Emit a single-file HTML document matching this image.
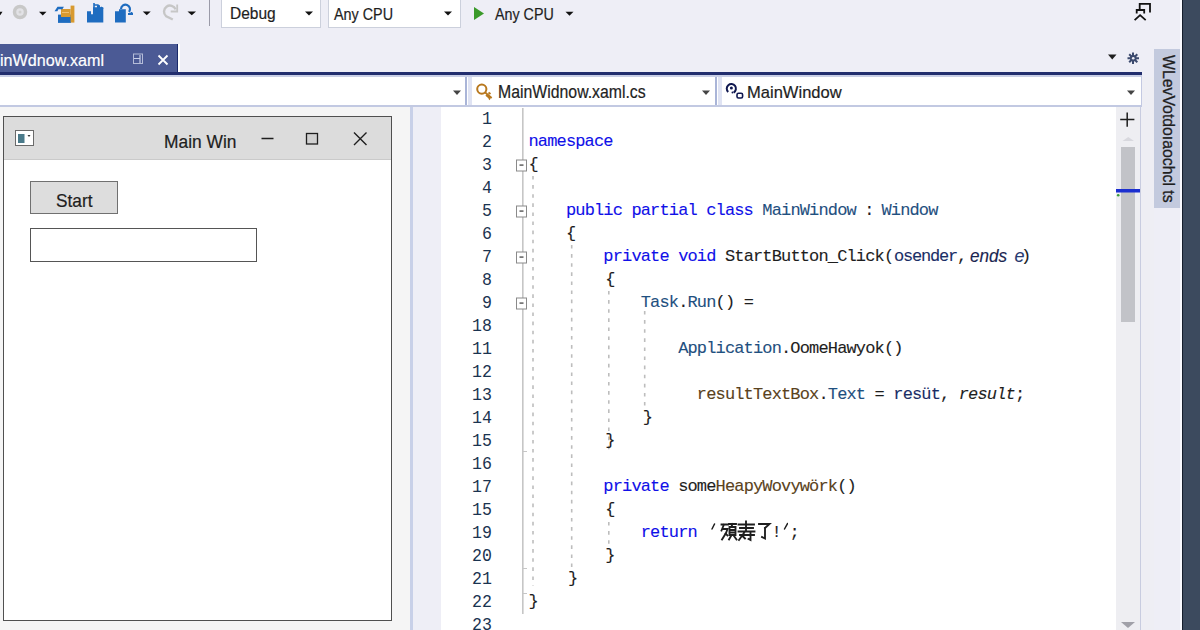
<!DOCTYPE html>
<html><head><meta charset="utf-8">
<style>
*{margin:0;padding:0;box-sizing:border-box}
html,body{width:1200px;height:630px;overflow:hidden;background:#eeeef6;font-family:"Liberation Sans",sans-serif;color:#1e1e1e}
.a{position:absolute}
.ui{line-height:20px;white-space:nowrap;-webkit-text-stroke:0.2px currentColor}
.code{font-family:"Liberation Mono",monospace;font-size:17.0px;letter-spacing:-0.850px;line-height:23px;white-space:pre;-webkit-text-stroke:0.1px currentColor}
.ln{position:absolute;left:431px;width:61px;margin-top:0px;transform:scaleX(0.92);transform-origin:61px 0;text-align:right;color:#1a3350;font-size:18px;letter-spacing:0;-webkit-text-stroke:0}
.cl{position:absolute;left:528.5px}
.k{color:#1010e8}
.t{color:#1f5080}
.m{color:#5a4220}
.d{color:#1e1e1e}
.n{color:#1a2e66}
</style></head><body>

<svg class="a" style="left:0;top:0" width="1200" height="44" viewBox="0 0 1200 44">
  <path d="M-2 11.75 h4.5 l-2.25 3.5z" fill="#111"/>
  <path d="M39 11.75 h7.5 l-3.75 3.75z" fill="#111"/>
  <path d="M142.75 11.5 h8 l-4 3.75z" fill="#111"/>
  <path d="M187.5 11.5 h8.5 l-4.25 3.75z" fill="#111"/>
  <circle cx="20" cy="12" r="5.5" fill="#e2e2e6" stroke="#c8c8c8" stroke-width="3.5"/>
  <circle cx="20" cy="12" r="1.5" fill="#d0d0d0"/>
  <path d="M58 14.6 h13 v8.3 h-13z" fill="#1e6cc0"/>
  <path d="M61 9 h9.6 v8 h-9.6z" fill="#d89a30"/>
  <path d="M62 12.5 h7" stroke="#f0c070" stroke-width="1"/>
  <path d="M70.6 5.6 h3.8 v17 h-3.8z" fill="#d89a30"/>
  <path d="M54.5 11.3 l3 -4.5 h6.4 l-1.5 2.5 h-4 l-1 2z" fill="#1e6cc0"/>
  <path d="M87 11.3 h4 v3 h2 v-7 h4 v-2 h3 v2 h3.3 v15.3 h-16.3z" fill="#1e6cc0"/>
  <path d="M94 3 v5 M94 5 h4 l2 3 M101 7 l2 2" stroke="#1e6cc0" stroke-width="1.6" fill="none"/>
  <path d="M115 11.3 h4 v-2 h6.8 v13.2 h-10.8z" fill="#1e6cc0"/>
  <path d="M121 9 a4.5 4.5 0 1 1 8 3" fill="none" stroke="#1e6cc0" stroke-width="2.2"/>
  <path d="M128 14 h5 M131.5 12 v3" stroke="#1e6cc0" stroke-width="1.8"/>
  <path d="M175.6 9.4 A6 6 0 1 0 166.2 16.2 L172.8 19.5" fill="none" stroke="#c6c6c6" stroke-width="2.4"/>
  <path d="M177.2 4.5 v7 h-6.5" fill="none" stroke="#c6c6c6" stroke-width="1.8"/>
  <rect x="209" y="0" width="1" height="26" fill="#9a9aa8"/>
  <path d="M474 7 l10 6.5 l-10 6.5z" fill="#3a9a2a"/>
  <path d="M565.5 11.75 h8 l-4 4z" fill="#111"/>
  <rect x="221.5" y="-2" width="99" height="29.5" fill="#fff" stroke="#ccd0dc"/>
  <rect x="328.5" y="-2" width="132" height="29.5" fill="#fff" stroke="#ccd0dc"/>
  <path d="M305 11.5 h8 l-4 4z" fill="#111"/>
  <path d="M444 11.5 h8 l-4 4z" fill="#111"/>
  <path d="M1139.7 9.5 V3.8 H1150 V12.6" fill="none" stroke="#111" stroke-width="1.8"/>
  <path d="M1136.7 13.6 V10 H1144.2 V13.6" fill="none" stroke="#111" stroke-width="1.8"/>
  <path d="M1134.6 20.2 L1140.1 15.2 L1145.7 20.2" fill="none" stroke="#111" stroke-width="1.8"/>
</svg>
<div class="a ui" style="left:230.2px;top:4.3px;font-size:17px;color:#1e1e1e;transform:scaleX(0.912);transform-origin:0 0;">Debug</div>
<div class="a ui" style="left:333.7px;top:4.6px;font-size:17px;color:#1e1e1e;transform:scaleX(0.845);transform-origin:0 0;">Any CPU</div>
<div class="a ui" style="left:495px;top:4.5px;font-size:17px;color:#1e1e1e;transform:scaleX(0.841);transform-origin:0 0;">Any CPU</div>
<div class="a" style="left:0;top:44px;width:178px;height:28px;background:#4b5a95"></div>
<div class="a ui" style="left:-0.4px;top:50.6px;font-size:17px;color:#fff;transform:scaleX(0.949);transform-origin:0 0;">inWdnow.xaml</div>
<div class="a" style="left:177px;top:44px;width:1px;height:28px;background:#1a2a6a"></div>
<div class="a" style="left:178px;top:44px;width:2px;height:28px;background:#ffffff"></div>
<svg class="a" style="left:0;top:44px" width="1200" height="28" viewBox="0 44 1200 28">
  <path d="M1108 54.5 h8.5 l-4.25 5z" fill="#1e1e1e"/>
  <rect x="133.5" y="54" width="9" height="9.5" fill="none" stroke="#b4bcd8" stroke-width="1"/>
  <path d="M134 58.5 h6 M140 55 v8" stroke="#c8d0e8" stroke-width="1.2"/>
  <path d="M158.5 55.5 l9 9 M167.5 55.5 l-9 9" stroke="#fff" stroke-width="1.8"/>
  <path d="M1133 52.5 v11.5 M1127.5 58.25 h11.5 M1129.2 54.2 l8.1 8.1 M1137.3 54.2 l-8.1 8.1" stroke="#3c4a6e" stroke-width="2"/>
  <circle cx="1133.25" cy="58.25" r="3.3" fill="#3c4a6e"/>
  <circle cx="1133.25" cy="58.25" r="1.3" fill="#eeeef6"/>
</svg>
<div class="a" style="left:0;top:72px;width:1142px;height:3px;background:#222e6e"></div>
<div class="a" style="left:0;top:75px;width:1142px;height:2px;background:#c9cfe6"></div>
<div class="a" style="left:0;top:77px;width:1142px;height:28px;background:#fff"></div>
<div class="a" style="left:465px;top:77px;width:2px;height:28px;background:#aab5d8"></div>
<div class="a" style="left:468px;top:77px;width:4px;height:28px;background:#dfe3f3"></div>
<div class="a" style="left:715px;top:77px;width:2px;height:28px;background:#aab5d8"></div>
<div class="a" style="left:718px;top:77px;width:4px;height:28px;background:#dfe3f3"></div>
<div class="a" style="left:0;top:105px;width:1142px;height:2px;background:#c2c9e2"></div>
<svg class="a" style="left:0;top:77px" width="1142" height="28" viewBox="0 77 1142 28">
  <path d="M453 90.5 h8 l-4 4.5z" fill="#444"/>
  <path d="M702 90.5 h8 l-4 4.5z" fill="#444"/>
  <path d="M1127 90.5 h8 l-4 4.5z" fill="#444"/>
  <circle cx="481.8" cy="89.1" r="4.6" fill="none" stroke="#b8781e" stroke-width="2"/>
  <path d="M485.2 92.5 l6.5 5.5 M486 95 l3 2.5 q1 1 0 2 M488.5 92.5 l2 1.5" fill="none" stroke="#b8781e" stroke-width="1.8"/>
  <path d="M728.2 92 a4.6 4.6 0 1 1 5.5 0.6" fill="none" stroke="#101850" stroke-width="2"/>
  <circle cx="731.4" cy="88" r="1.5" fill="#101850"/>
  <circle cx="732.5" cy="92.6" r="1" fill="#101850"/>
  <rect x="737" y="93.2" width="5.6" height="4.8" rx="1.5" fill="#fff" stroke="#101850" stroke-width="1.6"/>
</svg>
<div class="a ui" style="left:497.6px;top:81.7px;font-size:17.5px;color:#1e1e1e;transform:scaleX(0.904);transform-origin:0 0;">MainWidnow.xaml.cs</div>
<div class="a ui" style="left:747.3px;top:82.6px;font-size:17px;color:#1e1e1e;transform:scaleX(0.973);transform-origin:0 0;">MainWindow</div>
<div class="a" style="left:0;top:107px;width:410px;height:523px;background:#f5f5f5"></div>
<div class="a" style="left:410px;top:107px;width:3px;height:523px;background:#c8d0e8"></div>
<div class="a" style="left:413px;top:107px;width:28px;height:523px;background:#eeeef6"></div>
<div class="a" style="left:3px;top:116px;width:389px;height:505px;border:1px solid #505050;background:#fff"></div>
<div class="a" style="left:4px;top:117px;width:387px;height:43px;background:#dcdcdc;border-bottom:1px solid #cacaca"></div>
<div class="a ui" style="left:164.2px;top:132px;font-size:17.5px;color:#1e1e1e;transform:scaleX(0.993);transform-origin:0 0;">Main Win</div>
<svg class="a" style="left:0;top:117px" width="410" height="43" viewBox="0 117 410 43">
  <rect x="15.5" y="130.5" width="18" height="15" fill="#fff" stroke="#6a6a6a" stroke-width="1"/>
  <rect x="18" y="134" width="6.5" height="9" fill="#4a7a8a"/>
  <path d="M27.5 135 h3 l-1.5 2z" fill="#333"/>
  <path d="M261.5 138.5 h12" stroke="#1e1e1e" stroke-width="1.5"/>
  <rect x="306.5" y="133.5" width="11" height="10.5" fill="#d0d0d0" stroke="#1e1e1e" stroke-width="1.3"/>
  <path d="M354 132.5 l12.5 12.5 M366.5 132.5 l-12.5 12.5" stroke="#1e1e1e" stroke-width="1.4"/>
</svg>
<div class="a" style="left:30px;top:181px;width:88px;height:33px;border:1px solid #707070;background:#dddddd"></div>
<div class="a ui" style="left:55.6px;top:190.5px;font-size:19px;color:#1e1e1e;transform:scaleX(0.908);transform-origin:0 0;">Start</div>
<div class="a" style="left:30px;top:228px;width:227px;height:34px;border:1px solid #555"></div>
<div class="a" style="left:441px;top:107px;width:675px;height:523px;background:#fff"></div>
<div class="a" style="left:1116px;top:107px;width:24px;height:523px;background:#eeeef2"></div>
<div class="a" style="left:1121px;top:147px;width:14px;height:175px;background:#c2c3c8"></div>
<div class="a" style="left:1140px;top:107px;width:1px;height:523px;background:#c8cce0"></div>
<svg class="a" style="left:1110px;top:107px" width="40" height="523" viewBox="1110 107 40 523">
  <path d="M1127.2 112.5 v14.2 M1120.2 119.6 h14.2" stroke="#1e1e1e" stroke-width="1.5"/>
  <path d="M1122.5 141 l5.75 -4 l5.75 4z" fill="#d8d8de"/>
  <rect x="1116" y="189" width="24" height="3.5" fill="#1c2fd0"/>
  <circle cx="1118.2" cy="195.3" r="1.3" fill="#3a9a3a"/>
  <path d="M1121 622 h14 l-7 6z" fill="#a0a0a8"/>
</svg>
<div class="a" style="left:1141px;top:77px;width:13px;height:553px;background:#eeeef4"></div>
<div class="a" style="left:1141px;top:75px;width:1px;height:32px;background:#c3c9e2"></div>
<div class="a" style="left:1154px;top:49px;width:26px;height:159px;background:#c3cade"></div>
<div class="a" style="left:1158px;top:55px;font-size:17px;line-height:20px;writing-mode:vertical-rl;white-space:nowrap;color:#1e1e1e;-webkit-text-stroke:0.3px #1e1e1e;transform:scaleY(0.93);transform-origin:0 0">WLevVotdoıaochcl ts</div>
<div class="a" style="left:1179.5px;top:0;width:2.5px;height:630px;background:#fafaff"></div>
<div class="a" style="left:1182px;top:0;width:18px;height:630px;background:#3c4a5e;border-left:1.5px solid #161e2c"></div>
<svg class="a" style="left:441px;top:107px" width="675" height="523" viewBox="441 107 675 523">
<rect x="522" y="108" width="1.6" height="506" fill="#c6c6c6"/>
<rect x="522" y="451" width="5" height="1" fill="#c6c6c6"/>
<rect x="522" y="568" width="5" height="1" fill="#c6c6c6"/>
<rect x="522" y="593" width="5" height="1" fill="#c6c6c6"/>
<rect x="516.5" y="160.0" width="10" height="11" fill="#fff" stroke="#8a8a8a" stroke-width="1"/>
<rect x="519.5" y="164.3" width="4" height="1.6" fill="#6a6a6a"/>
<rect x="516.5" y="206.0" width="10" height="11" fill="#fff" stroke="#8a8a8a" stroke-width="1"/>
<rect x="519.5" y="210.3" width="4" height="1.6" fill="#6a6a6a"/>
<rect x="516.5" y="252.0" width="10" height="11" fill="#fff" stroke="#8a8a8a" stroke-width="1"/>
<rect x="519.5" y="256.3" width="4" height="1.6" fill="#6a6a6a"/>
<rect x="516.5" y="298.0" width="10" height="11" fill="#fff" stroke="#8a8a8a" stroke-width="1"/>
<rect x="519.5" y="302.3" width="4" height="1.6" fill="#6a6a6a"/>
<path d="M533 176 V586" stroke="#bdbdbd" stroke-width="1.6" stroke-dasharray="3.6 5.5"/>
<path d="M571.7 245 V567" stroke="#bdbdbd" stroke-width="1.6" stroke-dasharray="3.6 5.5"/>
<path d="M608.8 291 V452" stroke="#bdbdbd" stroke-width="1.6" stroke-dasharray="3.6 5.5"/>
<path d="M608.8 522 V546" stroke="#bdbdbd" stroke-width="1.6" stroke-dasharray="3.6 5.5"/>
<path d="M644.7 311 V407" stroke="#bdbdbd" stroke-width="1.6" stroke-dasharray="3.6 5.5"/>
</svg>
<div class="code">
<div class="ln" style="top:108px">1</div>
<div class="ln" style="top:131px">2</div>
<div class="cl" style="top:130px"><span class="k">namespace</span></div>
<div class="ln" style="top:154px">3</div>
<div class="cl" style="top:153px"><span class="d">{</span></div>
<div class="ln" style="top:177px">4</div>
<div class="ln" style="top:200px">5</div>
<div class="cl" style="top:199px">    <span class="k">public partial class</span> <span class="t">MainWindow</span> <span class="d" style="position:relative;left:-1px">:</span> <span class="t" style="position:relative;left:-2.5px">Window</span></div>
<div class="ln" style="top:223px">6</div>
<div class="cl" style="top:222px">    <span class="d">{</span></div>
<div class="ln" style="top:246px">7</div>
<div class="cl" style="top:245px">        <span class="k">private void</span> <span class="d">StartButton_Click(</span></div>
<div class="ln" style="top:269px">8</div>
<div class="cl" style="top:268px">        <span class="d" style="position:relative;left:2px">{</span></div>
<div class="ln" style="top:292px">9</div>
<div class="cl" style="top:291px">            <span class="t">Task</span><span class="d">.</span><span class="t">Run</span><span class="d">() =</span></div>
<div class="ln" style="top:315px">18</div>
<div class="ln" style="top:338px">11</div>
<div class="cl" style="top:337px">                <span class="t">Application</span><span class="d">.OomeHawyok()</span></div>
<div class="ln" style="top:361px">12</div>
<div class="ln" style="top:384px">13</div>
<div class="cl" style="top:383px">                  <span class="m">resultTextBox</span><span class="d">.</span><span class="t">Text</span> <span class="d">=</span> <span class="n">resüt</span><span class="d">,</span> <span class="d" style="font-style:italic">result</span><span class="d">;</span></div>
<div class="ln" style="top:407px">14</div>
<div class="cl" style="top:406px">            <span class="d" style="position:relative;left:2px">}</span></div>
<div class="ln" style="top:430px">15</div>
<div class="cl" style="top:429px">        <span class="d" style="position:relative;left:2px">}</span></div>
<div class="ln" style="top:453px">16</div>
<div class="ln" style="top:476px">17</div>
<div class="cl" style="top:475px">        <span class="k">private</span> <span class="d">some</span><span class="m">HeapyWovywörk</span><span class="d">()</span></div>
<div class="ln" style="top:499px">15</div>
<div class="cl" style="top:498px">        <span class="d" style="position:relative;left:2px">{</span></div>
<div class="ln" style="top:522px">19</div>
<div class="cl" style="top:521px">            <span class="k">return</span></div>
<div class="ln" style="top:545px">20</div>
<div class="cl" style="top:544px">        <span class="d" style="position:relative;left:2px">}</span></div>
<div class="ln" style="top:568px">21</div>
<div class="cl" style="top:567px">    <span class="d" style="position:relative;left:2px">}</span></div>
<div class="ln" style="top:591px">22</div>
<div class="cl" style="top:590px"><span class="d">}</span></div>
<div class="ln" style="top:614px">23</div>
<div class="a" style="left:894px;top:245px;letter-spacing:-1.2px"><span class="n">osender</span><span class="d">,</span></div>
<div class="a" style="left:969.5px;top:245px;font-family:'Liberation Sans',sans-serif;font-size:18px;font-style:italic;letter-spacing:0;transform:scaleX(0.95);transform-origin:0 0;-webkit-text-stroke:0.15px currentColor"><span style="color:#1a2550">ends</span></div>
<div class="a" style="left:1014.5px;top:245px;font-family:'Liberation Sans',sans-serif;font-size:18px;font-style:italic;letter-spacing:0"><span style="color:#2a3a70">e</span></div>
<div class="a" style="left:1021px;top:245px"><span class="d">)</span></div>
<div class="a" style="left:771.5px;top:521px"><span class="d">!</span></div>
<div class="a" style="left:789.5px;top:521px"><span class="d">;</span></div>
</div>
<svg class="a" style="left:708px;top:520px" width="80" height="24" viewBox="708 520 80 24">
<g fill="none" stroke="#1e1e1e" stroke-width="1.85" stroke-linecap="square">
 <path d="M721.5 524.5 h6.5 M724 524.5 l-2.5 6 M722.5 529 h5 l-1.5 4 l-4 6.5 M725.5 533.5 l2 2"/>
 <path d="M729 524 h7 M732.5 524 l-1 2.5 M729.5 527 h6 v8 h-6 z M729.5 530 h6 M729.5 532.5 h6 M731 536 l-2 3.5 M734 536 l2.5 3.5"/>
 <path d="M738.5 524.5 h15.5 M740 528 h13 M738.5 531.5 h16 M746 521.5 v10 M740 535 h14 M750.5 532.5 v7.5 l-2 -1 M743 536.5 l2 2 M745 531.5 l-6 8.5"/>
 <path d="M759 524 h10.5 l-4.5 4 M765 528 v10.5 l-3 -1.5"/>
 <path d="M714.5 524 l-2.5 5 M787.5 523.5 l-3 5.5" stroke-width="1.5" stroke-linecap="round"/>
</g></svg>
</body></html>
